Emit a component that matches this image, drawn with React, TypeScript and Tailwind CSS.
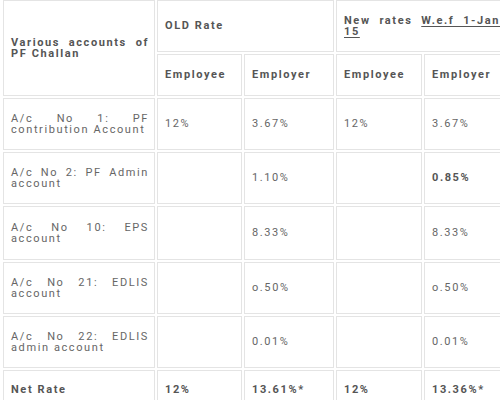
import React from 'react'

type Row = {
  label: string
  oldEmployee: string
  oldEmployer: string
  newEmployee: string
  newEmployer: string
  boldNewEmployer?: boolean
}

const rows: Row[] = [
  { label: 'A/c No 1: PF contribution Account', oldEmployee: '12%', oldEmployer: '3.67%', newEmployee: '12%', newEmployer: '3.67%' },
  { label: 'A/c No 2: PF Admin account', oldEmployee: '', oldEmployer: '1.10%', newEmployee: '', newEmployer: '0.85%', boldNewEmployer: true },
  { label: 'A/c No 10: EPS account', oldEmployee: '', oldEmployer: '8.33%', newEmployee: '', newEmployer: '8.33%' },
  { label: 'A/c No 21: EDLIS account', oldEmployee: '', oldEmployer: 'o.50%', newEmployee: '', newEmployer: 'o.50%' },
  { label: 'A/c No 22: EDLIS admin account', oldEmployee: '', oldEmployer: '0.01%', newEmployee: '', newEmployer: '0.01%' },
]

const cell = 'border border-[#e4e4e4] bg-white flex items-center pl-[7px] pr-[5px] min-w-0'
const plain = 'text-[#666666]'
const strong = 'font-bold text-[#555555]'

function Text({ children, bold }: { children: React.ReactNode; bold?: boolean }) {
  return <div className={`w-full text-justify ${bold ? strong : plain}`}>{children}</div>
}

export default function App() {
  return (
    <div
      className="w-[500px] h-[400px] overflow-hidden bg-white pl-[3px] text-[11px] leading-[11.5px] tracking-[1.6px]"
      style={{ fontFamily: 'Roboto, "Liberation Sans", sans-serif' }}
    >
      <div className="grid w-max grid-cols-[152px_85px_90px_86px_88px] grid-rows-[52px_42px_52px_52px_54px_52px_52px_40px] gap-[2px]">
        <div className={`${cell} row-span-2`}>
          <Text bold>Various accounts of PF Challan</Text>
        </div>
        <div className={`${cell} col-span-2`}>
          <Text bold>OLD Rate</Text>
        </div>
        <div className={`${cell} col-span-2`}>
          <Text bold>
            New rates <span className="underline underline-offset-[2px]">W.e.f 1-Jan-15</span>
          </Text>
        </div>
        <div className={cell}><Text bold>Employee</Text></div>
        <div className={cell}><Text bold>Employer</Text></div>
        <div className={cell}><Text bold>Employee</Text></div>
        <div className={cell}><Text bold>Employer</Text></div>

        {rows.map((r) => (
          <React.Fragment key={r.label}>
            <div className={cell}><Text>{r.label}</Text></div>
            <div className={cell}><Text>{r.oldEmployee}</Text></div>
            <div className={cell}><Text>{r.oldEmployer}</Text></div>
            <div className={cell}><Text>{r.newEmployee}</Text></div>
            <div className={cell}><Text bold={r.boldNewEmployer}>{r.newEmployer}</Text></div>
          </React.Fragment>
        ))}

        <div className={cell}><Text bold>Net Rate</Text></div>
        <div className={cell}><Text bold>12%</Text></div>
        <div className={cell}><Text bold>13.61%*</Text></div>
        <div className={cell}><Text bold>12%</Text></div>
        <div className={cell}><Text bold>13.36%*</Text></div>
      </div>
    </div>
  )
}
